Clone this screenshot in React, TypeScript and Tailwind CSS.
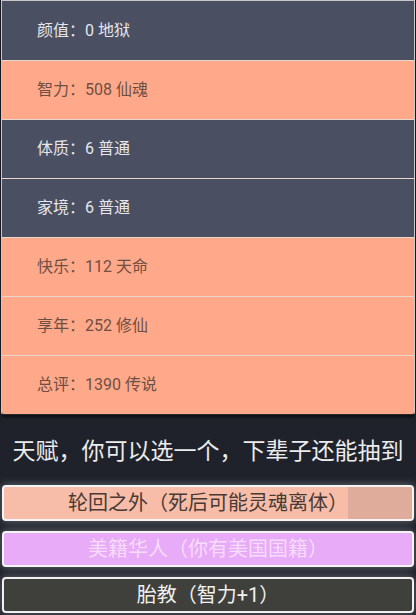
const font = { fontFamily: 'Roboto, "Noto Sans CJK SC", sans-serif' };

type Row = { label: string; value: string; hot: boolean };

const rows: Row[] = [
  { label: "颜值", value: "0 地狱", hot: false },
  { label: "智力", value: "508 仙魂", hot: true },
  { label: "体质", value: "6 普通", hot: false },
  { label: "家境", value: "6 普通", hot: false },
  { label: "快乐", value: "112 天命", hot: true },
  { label: "享年", value: "252 修仙", hot: true },
  { label: "总评", value: "1390 传说", hot: true },
];

export default function App() {
  return (
    <div className="w-[416px] h-[615px] bg-[#1f222b] overflow-hidden" style={font}>
      <div className="mx-px border border-[#c9c6c6] border-b-[#2a2a2a] rounded-b-[3px] overflow-hidden shadow-[0_2px_3px_rgba(0,0,0,0.6)]">
        {rows.map((r, i) => (
          <div
            key={r.label}
            className={`h-[59px] flex items-center pl-[35px] text-[16px] ${
              i > 0 ? "border-t border-[#e6d6cc]" : ""
            } ${r.hot ? "bg-[#ffa98a] text-[#6e4f43]" : "bg-[#4a4f62] text-[#e6e6ea]"}`}
          >
            {r.label}：{r.value}
          </div>
        ))}
      </div>

      <div className="h-[70px] pt-[5px] flex items-center justify-center text-[23px] text-[#ececec]">
        天赋，你可以选一个，下辈子还能抽到
      </div>

      <div className="flex flex-col gap-[10px] px-[2px]">
        <div className="relative h-[36px] rounded-[4px] border-2 border-[#f4f4f4] bg-[#f7bda8] overflow-hidden shadow-[0_0_8px_rgba(255,255,255,0.35)]">
          <div className="absolute right-0 top-0 bottom-0 w-[64px] bg-[#dfab9b]" />
          <div className="relative h-full flex items-center justify-center text-[20px] text-[#4a3a34]">
            轮回之外（死后可能灵魂离体）
          </div>
        </div>
        <div className="h-[36px] rounded-[4px] border-2 border-[#f4f4f4] bg-[#e8abf8] flex items-center justify-center text-[20px] text-[#f7dcfb] shadow-[0_0_8px_rgba(255,255,255,0.35)]">
          美籍华人（你有美国国籍）
        </div>
        <div className="h-[36px] rounded-[4px] border-2 border-[#f0f0f0] bg-[#3f3f3b] flex items-center justify-center text-[20px] text-[#f0f0f0] shadow-[0_0_8px_rgba(255,255,255,0.35)]">
          胎教（智力+1）
        </div>
      </div>
    </div>
  );
}
